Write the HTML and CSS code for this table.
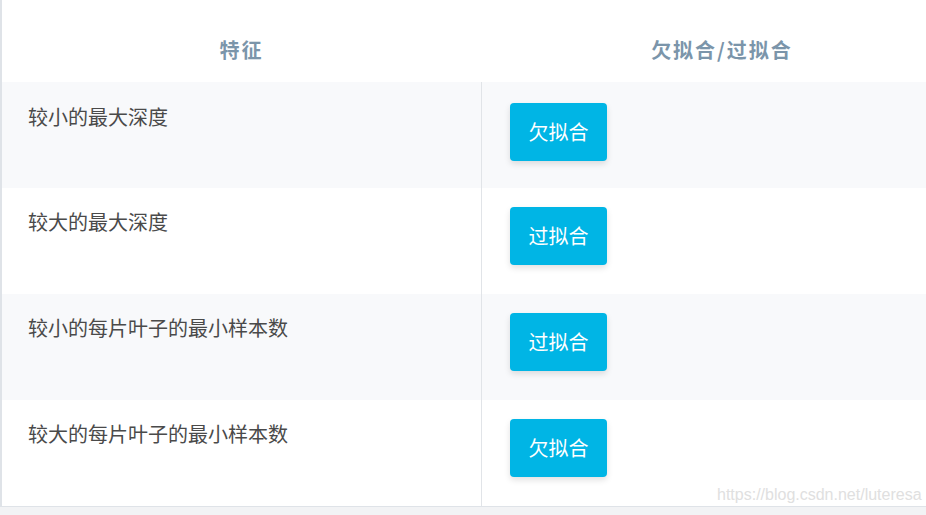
FILE: index.html
```html
<!DOCTYPE html>
<html lang="zh">
<head>
<meta charset="utf-8">
<link rel="stylesheet" href="styles.css">
</head>
<body>
<div class="card">
  <div class="head">
    <div class="th">特征</div>
    <div class="th">欠拟合/过拟合</div>
  </div>
  <div class="row alt first">
    <div class="td">较小的最大深度</div>
    <div class="td right"><span class="btn">欠拟合</span></div>
  </div>
  <div class="row">
    <div class="td">较大的最大深度</div>
    <div class="td right"><span class="btn">过拟合</span></div>
  </div>
  <div class="row alt">
    <div class="td">较小的每片叶子的最小样本数</div>
    <div class="td right"><span class="btn">过拟合</span></div>
  </div>
  <div class="row">
    <div class="td">较大的每片叶子的最小样本数</div>
    <div class="td right"><span class="btn">欠拟合</span></div>
    <span class="wm">https://blog.csdn.net/luteresa</span>
  </div>
</div>
</body>
</html>
```

FILE: styles.css
```css
html, body {
  margin: 0;
  padding: 0;
}
body {
  background: #f2f3f5;
  font-family: "Noto Sans CJK SC", "Noto Sans", sans-serif;
  width: 926px;
  height: 515px;
  overflow: hidden;
}
.card {
  background: #fff;
  border-left: 2px solid #dfe3e8;
  border-bottom: 1px solid #dfe3e8;
  width: 960px;
}
.head {
  display: grid;
  grid-template-columns: 479px 1fr;
  height: 82px;
}
.th {
  display: flex;
  align-items: center;
  justify-content: center;
  font-size: 20px;
  font-weight: 700;
  color: #7b95aa;
  letter-spacing: 2px;
  padding-top: 17px;
}
.th:last-child {
  margin-left: 1px;
}
.row {
  display: grid;
  grid-template-columns: 479px 1fr;
  height: 106px;
  position: relative;
}
.row.alt { background: #f8f9fb; }
.td {
  padding: 19px 26px;
  font-size: 20px;
  line-height: 30px;
  color: #4a4a4a;
}
.first .td { padding-top: 20px; }
.right {
  border-left: 1px solid #e1e4e8;
  padding: 19px 28px;
}
.first .right { padding-top: 21px; }
.btn {
  display: inline-flex;
  align-items: center;
  justify-content: center;
  width: 97px;
  height: 58px;
  background: #00b5e5;
  color: #fff;
  font-size: 20px;
  border-radius: 4px;
  box-shadow: 0 3px 6px rgba(0, 0, 0, 0.12);
}
.wm {
  position: absolute;
  left: 715px;
  bottom: 2px;
  font-family: "Liberation Sans", sans-serif;
  font-size: 16px;
  color: #e0e0e0;
}
```
